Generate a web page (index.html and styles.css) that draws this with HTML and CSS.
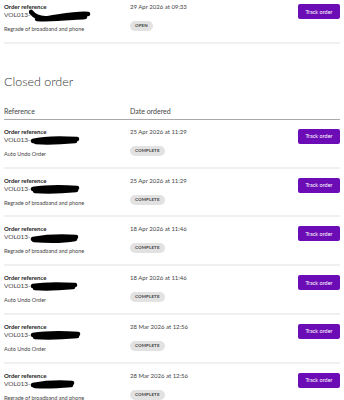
FILE: index.html
```html
<!DOCTYPE html>
<html lang="en">
  <head>
    <meta charset="UTF-8" />
    <meta name="viewport" content="width=device-width, initial-scale=1.0" />
    <title>Your orders</title>
    <link rel="stylesheet" href="styles.css">
  </head>

  <body>
    <div class="orders">
      <!-- Open orders (list is scrolled, only the last row shows) -->
      <div class="order-row first">
        <div class="ref">
          <div class="ref-label">Order reference</div>
          <div class="ref-number">VOL013-<svg class="scribble big" width="62" height="14" viewBox="0 0 62 14"><path d="M2 3 C6 8 12 10 20 9 C34 7 48 4 59 5 M8 10 C24 11 40 9 56 8" stroke="#000" stroke-width="4.5" stroke-linecap="round" fill="none"/></svg></div>
          <div class="ref-desc">Regrade of broadband and phone</div>
        </div>
        <div class="date">
          <div class="date-text">29 Apr 2026 at 09:33</div>
          <span class="badge">OPEN</span>
        </div>
        <div class="action"><button class="track-button">Track order</button></div>
      </div>

      <h2 class="section-title">Closed order</h2>

      <div class="order-head">
        <div>Reference</div>
        <div>Date ordered</div>
      </div>

      <div class="order-row">
        <div class="ref">
          <div class="ref-label">Order reference</div>
          <div class="ref-number">VOL013-<svg class="scribble" width="50" height="10" viewBox="0 0 50 10"><path d="M3 6 C14 3 30 3 47 4 M6 7 C20 8 34 7 45 6" stroke="#000" stroke-width="4.5" stroke-linecap="round" fill="none"/></svg></div>
          <div class="ref-desc">Auto Undo Order</div>
        </div>
        <div class="date">
          <div class="date-text">25 Apr 2026 at 11:29</div>
          <span class="badge">COMPLETE</span>
        </div>
        <div class="action"><button class="track-button">Track order</button></div>
      </div>

      <div class="order-row">
        <div class="ref">
          <div class="ref-label">Order reference</div>
          <div class="ref-number">VOL013-<svg class="scribble" width="50" height="10" viewBox="0 0 50 10"><path d="M3 5 C16 3 32 3 47 4 M5 7 C20 8 36 7 46 6" stroke="#000" stroke-width="4.5" stroke-linecap="round" fill="none"/></svg></div>
          <div class="ref-desc">Regrade of broadband and phone</div>
        </div>
        <div class="date">
          <div class="date-text">25 Apr 2026 at 11:29</div>
          <span class="badge">COMPLETE</span>
        </div>
        <div class="action"><button class="track-button">Track order</button></div>
      </div>

      <div class="order-row">
        <div class="ref">
          <div class="ref-label">Order reference</div>
          <div class="ref-number">VOL013-<svg class="scribble" width="50" height="10" viewBox="0 0 50 10"><path d="M3 6 C14 4 30 3 46 4 M4 7 C18 8 34 8 45 6" stroke="#000" stroke-width="4.5" stroke-linecap="round" fill="none"/></svg></div>
          <div class="ref-desc">Regrade of broadband and phone</div>
        </div>
        <div class="date">
          <div class="date-text">18 Apr 2026 at 11:46</div>
          <span class="badge">COMPLETE</span>
        </div>
        <div class="action"><button class="track-button">Track order</button></div>
      </div>

      <div class="order-row">
        <div class="ref">
          <div class="ref-label">Order reference</div>
          <div class="ref-number">VOL013-<svg class="scribble" width="50" height="10" viewBox="0 0 50 10"><path d="M3 5 C14 3 28 3 45 4 M5 7 C18 8 32 7 43 6" stroke="#000" stroke-width="4.5" stroke-linecap="round" fill="none"/></svg></div>
          <div class="ref-desc">Auto Undo Order</div>
        </div>
        <div class="date">
          <div class="date-text">18 Apr 2026 at 11:46</div>
          <span class="badge">COMPLETE</span>
        </div>
        <div class="action"><button class="track-button">Track order</button></div>
      </div>

      <div class="order-row">
        <div class="ref">
          <div class="ref-label">Order reference</div>
          <div class="ref-number">VOL013-<svg class="scribble" width="52" height="10" viewBox="0 0 52 10"><path d="M3 5 C16 3 32 3 48 4 M5 7 C20 8 36 7 47 6" stroke="#000" stroke-width="4.5" stroke-linecap="round" fill="none"/></svg></div>
          <div class="ref-desc">Auto Undo Order</div>
        </div>
        <div class="date">
          <div class="date-text">28 Mar 2026 at 12:56</div>
          <span class="badge">COMPLETE</span>
        </div>
        <div class="action"><button class="track-button">Track order</button></div>
      </div>

      <div class="order-row">
        <div class="ref">
          <div class="ref-label">Order reference</div>
          <div class="ref-number">VOL013-<svg class="scribble" width="46" height="10" viewBox="0 0 46 10"><path d="M3 6 C14 4 28 3 42 4 M5 7 C18 8 30 7 41 6" stroke="#000" stroke-width="4.5" stroke-linecap="round" fill="none"/></svg></div>
          <div class="ref-desc">Regrade of broadband and phone</div>
        </div>
        <div class="date">
          <div class="date-text">28 Mar 2026 at 12:56</div>
          <span class="badge">COMPLETE</span>
        </div>
        <div class="action"><button class="track-button">Track order</button></div>
      </div>
    </div>
  </body>
</html>
```

FILE: styles.css
```css
body {
  margin: 0;
  font-family: Lato, "Open Sans", sans-serif;
  color: #333;
  background: #fff;
}

* {
  box-sizing: border-box;
}

/* --- Orders list --- */

.orders {
  padding: 0 4px;
  margin-top: -5px;
}

.order-row {
  display: grid;
  grid-template-columns: 126px 1fr auto;
  align-items: start;
  height: 48.75px;
  overflow: hidden;
  padding-top: 8px;
  border-bottom: 2px solid #f0f0f0;
}

/* --- Reference column --- */

.ref-label {
  font-size: 6px;
  line-height: 8px;
  font-weight: 700;
  color: #222;
}

.ref-number {
  height: 8px;
  font-size: 6.5px;
  line-height: 8px;
  color: #444;
  white-space: nowrap;
}

.scribble {
  vertical-align: middle;
  margin: -4px 0 -4px -1px;
}

.scribble.big {
  margin: -5px 0 -7px -2px;
}

.ref-desc {
  margin-top: 6px;
  font-size: 5.5px;
  line-height: 8px;
  color: #444;
}

/* --- Date column --- */

.date-text {
  font-size: 6px;
  line-height: 8px;
  color: #444;
}

.badge {
  display: inline-block;
  margin-top: 7px;
  height: 10px;
  padding: 0 5px;
  border-radius: 5px;
  background: #e2e2e2;
  font-size: 4.5px;
  line-height: 10px;
  font-weight: 700;
  color: #444;
  letter-spacing: 0.1px;
}

/* --- Button --- */

.track-button {
  display: block;
  margin-top: 1px;
  width: 42px;
  height: 15px;
  padding: 0;
  border: 0;
  border-radius: 2px;
  background: #6c0cb6;
  color: #fff;
  font-family: inherit;
  font-size: 5.5px;
}

/* --- Closed section --- */

.section-title {
  margin: 30px 0 16px;
  font-size: 12.5px;
  line-height: 16px;
  font-weight: 300;
  color: #333;
}

.order-head {
  display: grid;
  grid-template-columns: 126px 1fr;
  font-size: 7px;
  line-height: 10px;
  color: #444;
  padding-bottom: 3px;
  border-bottom: 1px solid #aaa;
}
```
